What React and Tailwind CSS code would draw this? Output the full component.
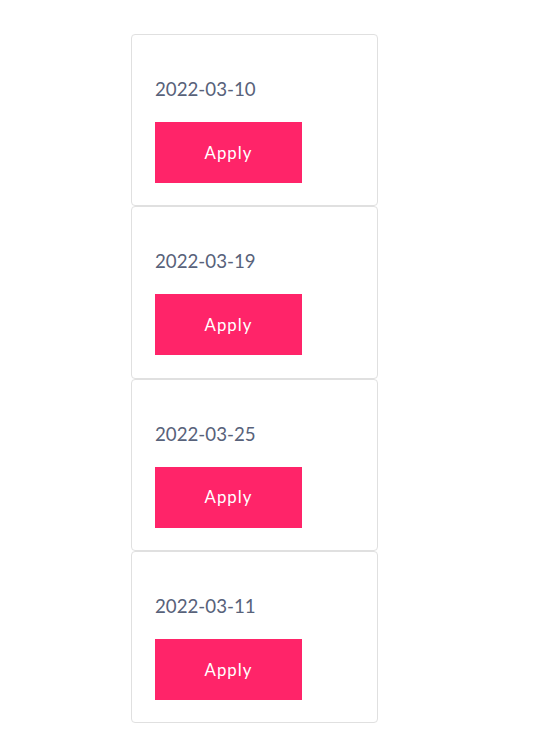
const dates = ["2022-03-10", "2022-03-19", "2022-03-25", "2022-03-11"];

function DateCard({ date }) {
  return (
    <div className="w-[247px] h-[172.25px] border border-[#e0e0e0] rounded-[4px] bg-white pl-[23px] pt-[40px]">
      <p className="text-[18.7px] leading-[28px] text-[#58627a]">{date}</p>
      <button className="mt-[19px] w-[147px] h-[61px] bg-[#ff2469] text-white text-[16.8px] tracking-[0.06em]">
        Apply
      </button>
    </div>
  );
}

export default function App() {
  return (
    <div className="min-h-[733px] bg-white pl-[131px] pt-[34px] font-['Lato',sans-serif]">
      <div className="flex flex-col">
        {dates.map((d) => (
          <DateCard key={d} date={d} />
        ))}
      </div>
    </div>
  );
}
